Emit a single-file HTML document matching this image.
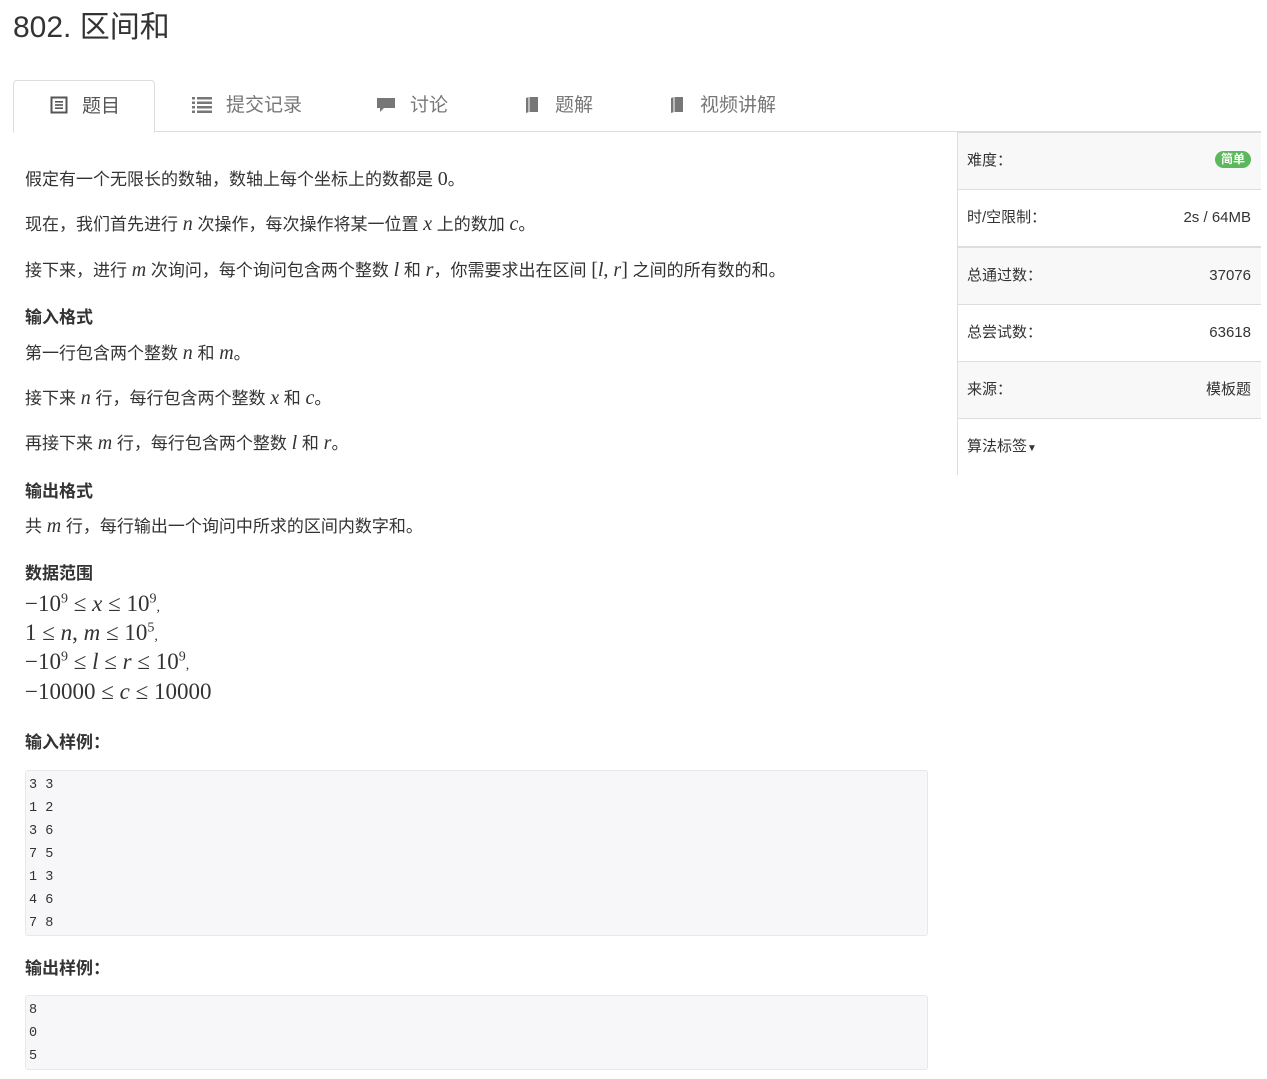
<!DOCTYPE html>
<html><head><meta charset="utf-8"><style>
body{margin:0;width:1267px;height:1079px;background:#fff;font-family:"Liberation Sans","Noto Sans CJK SC",sans-serif;color:#333;position:relative;overflow:hidden}
h1{position:absolute;left:13px;top:2px;margin:0;font-weight:normal;font-size:30px;color:#333;font-family:"Liberation Sans","Noto Sans CJK SC",sans-serif}
.tabs{position:absolute;left:13px;top:131px;width:1247px;border-top:1px solid #ddd}
.tab{position:absolute;top:80px;height:51px;font-size:19px;color:#777;line-height:51px}
.tab.act{left:13px;width:142px;border:1px solid #ddd;border-bottom:1px solid #fff;border-radius:4px 4px 0 0;color:#555;box-sizing:border-box;height:53px;background:#fff}
.ic{display:inline-block;vertical-align:middle;margin-right:14px;margin-top:-4px}
.p{position:absolute;left:25px;font-size:17px;color:#333}
.m{font-family:"Liberation Serif",serif;font-style:italic;font-size:20px}
.n{font-family:"Liberation Serif",serif;font-size:20px}
.h{position:absolute;left:25px;font-size:17px;font-weight:bold;color:#333}
.math{position:absolute;left:25px;font-family:"Liberation Serif",serif;font-size:23px;color:#333}
.math i{font-style:italic}
pre{position:absolute;left:25px;width:903px;margin:0;background:#f7f7f9;border:1px solid #e8e8e8;border-radius:3px;box-sizing:border-box;font-family:"Liberation Mono",monospace;font-size:13.5px;line-height:23px;padding:3px 3px;color:#333}
.side{position:absolute;left:957px;top:132px;width:303px;border-left:1px solid #ddd}
.row{height:56px;border-bottom:1px solid #ddd;font-size:15px;color:#333;line-height:56px;padding:0 10px 0 9px;display:flex;justify-content:space-between}
.g{background:#f8f8f8}
.badge{background:#5cb85c;color:#fff;font-size:12px;font-weight:bold;border-radius:9px;padding:0 6px;line-height:17px;height:17px;margin-top:18px}
</style></head><body>
<h1>802. 区间和</h1>
<div class="tabs"></div>
<div class="tab act"><span style="position:absolute;left:36px;top:0"><svg class="ic" width="18" height="18" viewBox="0 0 18 18"><rect x="1.5" y="1.5" width="15" height="15" fill="none" stroke="#555" stroke-width="2"/><rect x="5" y="5" width="8" height="1.6" fill="#555"/><rect x="5" y="8.2" width="8" height="1.6" fill="#555"/><rect x="5" y="11.4" width="8" height="1.6" fill="#555"/></svg>题目</span></div>
<div class="tab" style="left:192px"><svg class="ic" width="20" height="18" viewBox="0 0 20 18"><g fill="#777"><rect x="0" y="2" width="3" height="2.5"/><rect x="5" y="2" width="15" height="2.5"/><rect x="0" y="6.5" width="3" height="2.5"/><rect x="5" y="6.5" width="15" height="2.5"/><rect x="0" y="11" width="3" height="2.5"/><rect x="5" y="11" width="15" height="2.5"/><rect x="0" y="15.5" width="3" height="2.5"/><rect x="5" y="15.5" width="15" height="2.5"/></g></svg>提交记录</div>
<div class="tab" style="left:376px"><svg class="ic" width="20" height="18" viewBox="0 0 20 18"><path d="M1 3h18v10H8l-4 4v-4H1z" fill="#777"/></svg>讨论</div>
<div class="tab" style="left:523px"><svg class="ic" width="18" height="18" viewBox="0 0 18 18"><path d="M3 3l3-1h9v15H6L3 18z" fill="#777"/><path d="M6 2v15" stroke="#fff" stroke-width="1"/></svg>题解</div>
<div class="tab" style="left:668px"><svg class="ic" width="18" height="18" viewBox="0 0 18 18"><path d="M3 3l3-1h9v15H6L3 18z" fill="#777"/><path d="M6 2v15" stroke="#fff" stroke-width="1"/></svg>视频讲解</div>

<div class="p" style="top:165px">假定有一个无限长的数轴，数轴上每个坐标上的数都是 <span class="n">0</span>。</div>
<div class="p" style="top:210px">现在，我们首先进行 <span class="m">n</span> 次操作，每次操作将某一位置 <span class="m">x</span> 上的数加 <span class="m">c</span>。</div>
<div class="p" style="top:256px">接下来，进行 <span class="m">m</span> 次询问，每个询问包含两个整数 <span class="m">l</span> 和 <span class="m">r</span>，你需要求出在区间 <span class="n">[<i>l</i>, <i>r</i>]</span> 之间的所有数的和。</div>
<div class="h" style="top:303px">输入格式</div>
<div class="p" style="top:339px">第一行包含两个整数 <span class="m">n</span> 和 <span class="m">m</span>。</div>
<div class="p" style="top:384px">接下来 <span class="m">n</span> 行，每行包含两个整数 <span class="m">x</span> 和 <span class="m">c</span>。</div>
<div class="p" style="top:429px">再接下来 <span class="m">m</span> 行，每行包含两个整数 <span class="m">l</span> 和 <span class="m">r</span>。</div>
<div class="h" style="top:477px">输出格式</div>
<div class="p" style="top:512px">共 <span class="m">m</span> 行，每行输出一个询问中所求的区间内数字和。</div>
<div class="h" style="top:559px">数据范围</div>
<div class="math" style="top:591px">−10<sup style="font-size:14px">9</sup> ≤ <i>x</i> ≤ 10<sup style="font-size:14px">9</sup><span style="font-size:14px">,</span></div>
<div class="math" style="top:620px">1 ≤ <i>n</i>, <i>m</i> ≤ 10<sup style="font-size:14px">5</sup><span style="font-size:14px">,</span></div>
<div class="math" style="top:649px">−10<sup style="font-size:14px">9</sup> ≤ <i>l</i> ≤ <i>r</i> ≤ 10<sup style="font-size:14px">9</sup><span style="font-size:14px">,</span></div>
<div class="math" style="top:679px">−10000 ≤ <i>c</i> ≤ 10000</div>
<div class="h" style="top:728px">输入样例：</div>
<pre style="top:770px;height:166px">3 3
1 2
3 6
7 5
1 3
4 6
7 8</pre>
<div class="h" style="top:954px">输出样例：</div>
<pre style="top:995px;height:75px">8
0
5</pre>

<div class="side" style="border-top:2px solid #ddd;top:131px">
<div class="row g"><span>难度：</span><span class="badge">简单</span></div>
<div class="row" style="border-bottom:2px solid #ddd"><span>时/空限制：</span><span>2s / 64MB</span></div>
<div class="row g"><span>总通过数：</span><span>37076</span></div>
<div class="row"><span>总尝试数：</span><span>63618</span></div>
<div class="row g"><span>来源：</span><span>模板题</span></div>
<div class="row" style="border-bottom:none"><span>算法标签<span style="font-size:10px">▼</span></span><span></span></div>
</div>
</body></html>
